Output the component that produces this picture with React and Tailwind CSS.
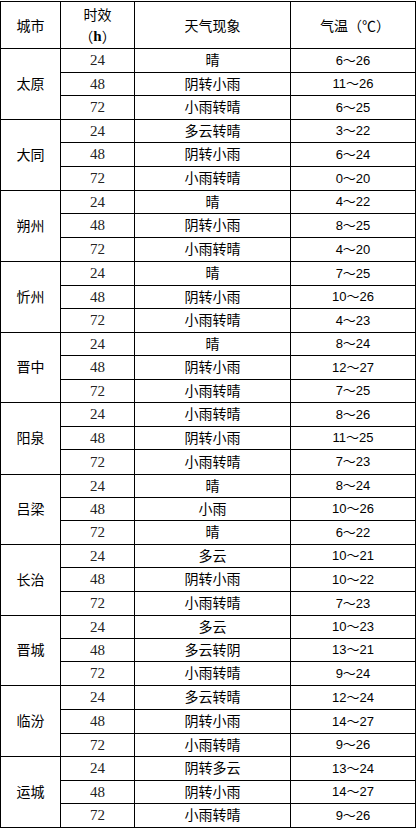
import React from 'react';

const CITIES = [
  { name: '太原', rows: [['24', '晴', '6～26', 24], ['48', '阴转小雨', '11～26', 23], ['72', '小雨转晴', '6～25', 24]] },
  { name: '大同', rows: [['24', '多云转晴', '3～22', 23], ['48', '阴转小雨', '6～24', 24], ['72', '小雨转晴', '0～20', 24]] },
  { name: '朔州', rows: [['24', '晴', '4～22', 23], ['48', '阴转小雨', '8～25', 24], ['72', '小雨转晴', '4～20', 24]] },
  { name: '忻州', rows: [['24', '晴', '7～25', 24], ['48', '阴转小雨', '10～26', 23], ['72', '小雨转晴', '4～23', 24]] },
  { name: '晋中', rows: [['24', '晴', '8～24', 23], ['48', '阴转小雨', '12～27', 24], ['72', '小雨转晴', '7～25', 23]] },
  { name: '阳泉', rows: [['24', '小雨转晴', '8～26', 24], ['48', '阴转小雨', '11～25', 23], ['72', '小雨转晴', '7～23', 25]] },
  { name: '吕梁', rows: [['24', '晴', '8～24', 23], ['48', '小雨', '10～26', 23], ['72', '晴', '6～22', 24]] },
  { name: '长治', rows: [['24', '多云', '10～21', 23], ['48', '阴转小雨', '10～22', 24], ['72', '小雨转晴', '7～23', 24]] },
  { name: '晋城', rows: [['24', '多云', '10～23', 23], ['48', '多云转阴', '13～21', 23], ['72', '小雨转晴', '9～24', 24]] },
  { name: '临汾', rows: [['24', '多云转晴', '12～24', 24], ['48', '阴转小雨', '14～27', 24], ['72', '小雨转晴', '9～26', 23]] },
  { name: '运城', rows: [['24', '阴转多云', '13～24', 24], ['48', '阴转小雨', '14～27', 23], ['72', '小雨转晴', '9～26', 24]] },
];

const cjk = "font-['Liberation_Sans','Noto_Sans_CJK_SC',sans-serif]";
const cjkOnly = "font-['Noto_Sans_CJK_SC',sans-serif]";
const serif = "font-['Liberation_Serif','Noto_Sans_CJK_SC',serif]";

function rowHeight(h) {
  if (h === 23) return 'h-[23px]';
  if (h === 25) return 'h-[25px]';
  return 'h-[24px]';
}

// full-width brackets, kept on a 14px grid like the original sheet
function Open() {
  return <span className="inline-block w-[14px] text-right">（</span>;
}
function Close() {
  return <span className="inline-block w-[14px] text-left">）</span>;
}

export default function App() {
  return (
    <div className="bg-white w-[417px] h-[829px] pt-px">
      <div className={`w-[416px] border-l border-t border-black text-black text-[14px] ${cjk}`}>
        <div className={`flex h-[47px] ${cjkOnly}`}>
          <div className="w-[60px] border-r border-b border-black flex items-center justify-center">城市</div>
          <div className="w-[74px] border-r border-b border-black flex flex-col items-center justify-center leading-[22px]">
            <span>时效</span>
            <span className="flex items-center">
              <Open />
              <span className={`${serif} text-[15px] font-bold`}>h</span>
              <Close />
            </span>
          </div>
          <div className="w-[156px] border-r border-b border-black flex items-center justify-center">天气现象</div>
          <div className="w-[125px] border-r border-b border-black flex items-center justify-center pl-[4px]">
            <span>气温</span>
            <Open />
            <span className="inline-block w-[14px] text-center">℃</span>
            <Close />
          </div>
        </div>

        {CITIES.map((city) => (
          <div key={city.name} className="flex">
            <div className="w-[60px] border-r border-b border-black flex items-center justify-center">{city.name}</div>
            <div className="flex flex-col">
              {city.rows.map(([hours, weather, temp, h]) => (
                <div key={hours} className={`flex ${rowHeight(h)}`}>
                  <div className={`w-[74px] border-r border-b border-black flex items-center justify-center text-[15px] text-[#222] ${serif}`}>
                    {hours}
                  </div>
                  <div className="w-[156px] border-r border-b border-black flex items-center justify-center">{weather}</div>
                  <div className="w-[125px] border-r border-b border-black flex items-center justify-center text-[13px]">{temp}</div>
                </div>
              ))}
            </div>
          </div>
        ))}
      </div>
    </div>
  );
}
